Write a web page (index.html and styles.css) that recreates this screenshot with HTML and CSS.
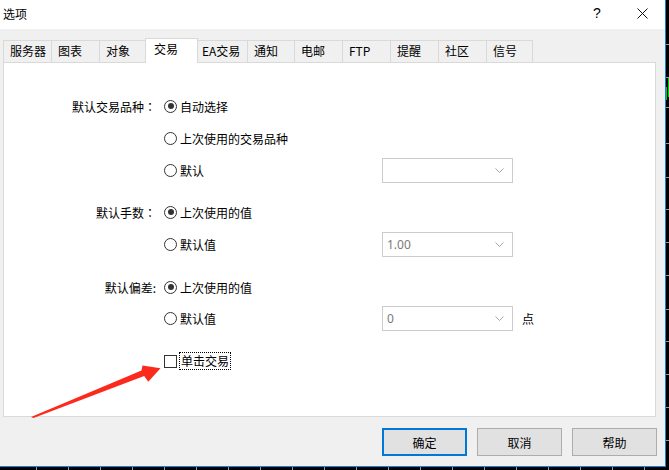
FILE: index.html
```html
<!DOCTYPE html>
<html lang="zh-CN">
<head>
<meta charset="utf-8">
<title>选项</title>
<link rel="stylesheet" href="styles.css">
</head>
<body>
<svg class="chart" width="669" height="470" viewBox="0 0 669 470">
  <g stroke="#8c9aa6" stroke-width="1">
    <path d="M666 44.5H669M666 77.5H669M666 107.5H669M666 143.5H669M666 177.5H669M666 209.5H669M666 242.5H669M666 275.5H669M666 309.5H669M666 341.5H669M666 374.5H669M666 407.5H669M666 440.5H669"/>
    <path d="M36.5 467V470M68.5 467V470M100.5 467V470M132.5 467V470M164.5 467V470M196.5 467V470M228.5 467V470M260.5 467V470M292.5 467V470M324.5 467V470M356.5 467V470M388.5 467V470M420.5 467V470M452.5 467V470M484.5 467V470M516.5 467V470M548.5 467V470M580.5 467V470M612.5 467V470M644.5 467V470"/>
  </g>
  <rect x="666" y="87" width="1" height="13" fill="#00d000"/>
  <rect x="668" y="78" width="1" height="19" fill="#00d000"/>
</svg>

<div class="dialog">
  <div class="titlebar">
    <span class="title">选项</span>
    <span class="help">?</span>
    <span class="close"><svg width="11" height="11" viewBox="0 0 11 11"><path d="M0.5 0.5L10.5 10.5M10.5 0.5L0.5 10.5" stroke="#111" stroke-width="1" fill="none"/></svg></span>
  </div>

  <div class="tabs">
    <div class="tab">服务器</div>
    <div class="tab">图表</div>
    <div class="tab">对象</div>
    <div class="tab active">交易</div>
    <div class="tab wide">EA交易</div>
    <div class="tab narrow">通知</div>
    <div class="tab">电邮</div>
    <div class="tab">FTP</div>
    <div class="tab">提醒</div>
    <div class="tab">社区</div>
    <div class="tab slim">信号</div>
  </div>

  <div class="panel">
    <div class="rows">
      <div class="row">
        <div class="label">默认交易品种<span class="colon">：</span></div>
        <div class="option"><span class="radio checked"></span><span>自动选择</span></div>
      </div>
      <div class="row">
        <div class="label"></div>
        <div class="option"><span class="radio"></span><span>上次使用的交易品种</span></div>
      </div>
      <div class="row">
        <div class="label"></div>
        <div class="option"><span class="radio"></span><span>默认</span></div>
        <div class="combo"><span class="value"></span><svg class="chev" width="9" height="5" viewBox="0 0 9 5"><path d="M0.5 0.5L4.5 4.5L8.5 0.5" stroke="#a6a6a6" fill="none"/></svg></div>
      </div>
      <div class="row group">
        <div class="label">默认手数<span class="colon">：</span></div>
        <div class="option"><span class="radio checked"></span><span>上次使用的值</span></div>
      </div>
      <div class="row">
        <div class="label"></div>
        <div class="option"><span class="radio"></span><span>默认值</span></div>
        <div class="combo"><span class="value">1.00</span><svg class="chev" width="9" height="5" viewBox="0 0 9 5"><path d="M0.5 0.5L4.5 4.5L8.5 0.5" stroke="#a6a6a6" fill="none"/></svg></div>
      </div>
      <div class="row group2">
        <div class="label">默认偏差:</div>
        <div class="option"><span class="radio checked"></span><span>上次使用的值</span></div>
      </div>
      <div class="row tight">
        <div class="label"></div>
        <div class="option"><span class="radio"></span><span>默认值</span></div>
        <div class="combo"><span class="value">0</span><svg class="chev" width="9" height="5" viewBox="0 0 9 5"><path d="M0.5 0.5L4.5 4.5L8.5 0.5" stroke="#a6a6a6" fill="none"/></svg></div>
        <div class="unit">点</div>
      </div>
      <div class="row group2">
        <div class="label"></div>
        <div class="option"><span class="checkbox"></span><span class="focus">单击交易</span></div>
      </div>
    </div>
  </div>

  <div class="buttons">
    <button class="btn default">确定</button>
    <button class="btn">取消</button>
    <button class="btn">帮助</button>
  </div>
</div>

<svg class="arrow" width="669" height="470" viewBox="0 0 669 470">
  <polygon points="31,417 141.5,370.5 142.5,365.5 160.5,368.3 148.3,381.8 144.2,376 33.5,418" fill="#fc2a1c"/>
</svg>
</body>
</html>
```
FILE: styles.css
```css
* { box-sizing: border-box; }
html, body { margin: 0; padding: 0; }
body {
  width: 669px;
  height: 470px;
  background: #000;
  position: relative;
  overflow: hidden;
  font-family: "Noto Sans CJK SC", "Noto Sans", sans-serif;
  font-size: 12px;
  color: #000;
}
.chart {
  position: absolute;
  left: 0;
  top: 0;
}
.arrow {
  position: absolute;
  left: 0;
  top: 0;
  pointer-events: none;
}
.dialog {
  position: relative;
  width: 666px;
  height: 467px;
  background: #f0f0f0;
  border-right: 1px solid #1a7fd6;
  border-bottom: 1px solid #1a7fd6;
  display: flex;
  flex-direction: column;
}
.titlebar {
  height: 29px;
  background: #fff;
  display: flex;
  align-items: center;
}
.title {
  padding-left: 3px;
  line-height: 16px;
  margin-top: -2px;
}
.help {
  margin-left: auto;
  width: 44px;
  text-align: center;
  font-family: "Liberation Sans", sans-serif;
  font-size: 14px;
  margin-top: -3px;
}
.close {
  width: 46px;
  display: flex;
  justify-content: center;
  align-items: center;
  margin-top: -3px;
}
.tabs {
  display: flex;
  align-items: flex-end;
  height: 22px;
  margin-top: 11px;
  padding-left: 3px;
}
.tab {
  width: 49px;
  height: 22px;
  border: 1px solid #d9d9d9;
  border-bottom: none;
  margin-left: -1px;
  padding-left: 6px;
  line-height: 20px;
  background: #f0f0f0;
  white-space: nowrap;
}
.tab:first-child { margin-left: 0; }
.tab.wide { width: 53px; }
.tab.narrow { width: 48px; }
.tab.slim { width: 47px; }
.tab.active {
  position: relative;
  z-index: 2;
  width: 53px;
  height: 25px;
  margin-left: -3px;
  margin-right: -2px;
  margin-bottom: -1px;
  padding-left: 8px;
  background: #fff;
  line-height: 20px;
}
.panel {
  margin-left: 3px;
  width: 653px;
  height: 355px;
  background: #fff;
  border: 1px solid #d9d9d9;
  padding-top: 31px;
}
.rows {
  display: flex;
  flex-direction: column;
  gap: 8px;
}
.row {
  display: flex;
  align-items: center;
  height: 24px;
}
.row.group { margin-top: 10px; }
.row.group2 { margin-top: 11px; }
.row.tight { margin-top: -1px; }
.label {
  width: 152px;
  text-align: right;
  white-space: nowrap;
  text-spacing-trim: space-all;
}
.colon {
  display: inline-block;
  width: 12px;
  text-align: center;
  font-family: "Noto Sans CJK TC", "Noto Sans CJK SC", sans-serif;
}
.option {
  margin-left: 8px;
  width: 218px;
  display: flex;
  align-items: center;
  white-space: nowrap;
}
.radio {
  width: 13px;
  height: 13px;
  border: 1px solid #333;
  border-radius: 50%;
  margin-right: 3px;
  display: flex;
  align-items: center;
  justify-content: center;
  flex: none;
}
.radio.checked::after {
  content: "";
  width: 6px;
  height: 6px;
  border-radius: 50%;
  background: #333;
}
.checkbox {
  width: 13px;
  height: 13px;
  border: 1px solid #333;
  margin-right: 2px;
  flex: none;
}
.focus {
  border: 1px dotted #000;
  padding: 0 1px;
  line-height: 16px;
}
.combo {
  width: 131px;
  height: 25px;
  border: 1px solid #cccccc;
  background: #fff;
  display: flex;
  align-items: center;
  padding-left: 4px;
  padding-right: 8px;
}
.combo .value {
  flex: 1;
  color: #7a7a7a;
  font-family: "Noto Sans", sans-serif;
  font-size: 12px;
}
.chev { flex: none; }
.unit { margin-left: 9px; }
.buttons {
  display: flex;
  justify-content: flex-end;
  gap: 10px;
  margin-top: 11px;
  padding-right: 8px;
}
.btn {
  width: 85px;
  height: 28px;
  background: #e1e1e1;
  border: 1px solid #adadad;
  font-family: "Noto Sans CJK SC", sans-serif;
  font-size: 12px;
  color: #000;
  padding: 0;
}
.btn.default { border: 2px solid #0078d7; }
```
